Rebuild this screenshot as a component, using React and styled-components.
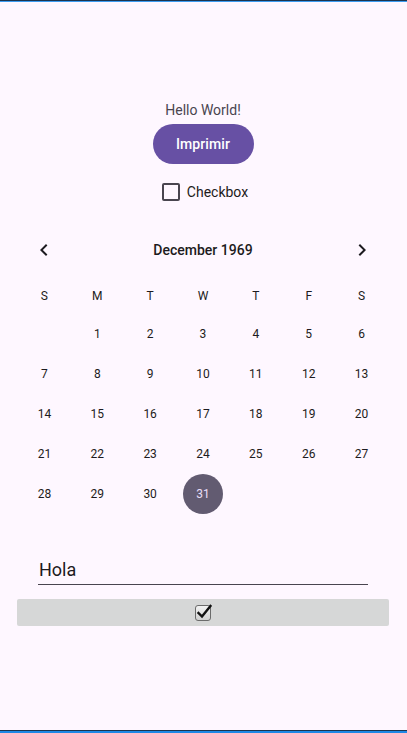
import React, { useState } from "react";
import styled, { createGlobalStyle } from "styled-components";

const GlobalStyle = createGlobalStyle`
  html, body {
    margin: 0;
    padding: 0;
    background: #fef7ff;
  }
  body {
    font-family: Roboto, "Noto Sans", sans-serif;
    color: #1d1b20;
  }
`;

const Screen = styled.div`
  width: 407px;
  height: 733px;
  display: flex;
  flex-direction: column;
  background: #fef7ff;
  overflow: hidden;
`;

const Edge = styled.div`
  height: ${(p) => (p.bottom ? 3 : 2)}px;
  flex-shrink: 0;
  background: ${(p) =>
    p.bottom
      ? "linear-gradient(#1b3550 0 1px, #1e88e5 1px)"
      : "linear-gradient(#1b3550 0 1px, #3d9cf0 1px)"};
`;

const Content = styled.div`
  flex: 1;
  display: flex;
  flex-direction: column;
  align-items: center;
  padding: 100px 1px 0 0;
`;

const Greeting = styled.div`
  font-size: 14px;
  line-height: 16px;
  color: #49454f;
`;

const PrimaryButton = styled.button`
  margin-top: 6px;
  width: 101px;
  height: 40px;
  border: none;
  border-radius: 20px;
  background: #6750a4;
  color: #ffffff;
  font-family: Roboto, sans-serif;
  font-size: 14px;
  font-weight: 500;
  letter-spacing: 0.1px;
  cursor: pointer;
`;

const CheckRow = styled.label`
  margin-top: 12px;
  height: 32px;
  display: flex;
  align-items: center;
  gap: 7px;
  font-size: 14px;
  color: #1d1b20;
  margin-left: 4px;
`;

const Box = styled.span`
  width: 14px;
  height: 14px;
  border: 2px solid #49454f;
  border-radius: 2px;
`;

const Calendar = styled.div`
  margin-top: 18px;
  width: 370px;
`;

const Grid = styled.div`
  display: grid;
  grid-template-columns: repeat(7, 1fr);
`;

const Header = styled(Grid)`
  height: 48px;
  align-items: center;
`;

const Nav = styled.span`
  display: flex;
  justify-content: center;
  align-items: center;
`;

const Title = styled.span`
  grid-column: 2 / span 5;
  text-align: center;
  font-size: 14px;
  font-weight: 500;
`;

const WeekRow = styled(Grid)`
  height: 40px;
  padding-top: 3px;
  box-sizing: border-box;
  align-items: center;
`;

const WeekDay = styled.span`
  text-align: center;
  font-size: 12px;
  color: #1d1b20;
`;

const Day = styled.span`
  height: 40px;
  display: flex;
  justify-content: center;
  align-items: center;
`;

const DayNum = styled.span`
  width: 40px;
  height: 40px;
  border-radius: 50%;
  display: flex;
  justify-content: center;
  align-items: center;
  font-size: 12px;
  background: ${(p) => (p.selected ? "#625b71" : "transparent")};
  color: ${(p) => (p.selected ? "#e8def8" : "#1d1b20")};
`;

const Field = styled.input`
  margin-top: 42px;
  align-self: flex-start;
  margin-left: 38px;
  width: 329px;
  height: 28px;
  box-sizing: content-box;
  padding: 0 0 0 1px;
  border: none;
  border-bottom: 1px solid #49454f;
  background: transparent;
  font-family: Roboto, sans-serif;
  font-size: 18px;
  line-height: 28px;
  color: #1d1b20;
  outline: none;
`;

const ToggleBar = styled.div`
  margin-top: 14px;
  width: 372px;
  height: 27px;
  border-radius: 2px;
  background: #d6d7d7;
  display: flex;
  justify-content: center;
  align-items: center;
`;

const Chevron = ({ dir }) => (
  <svg width="24" height="24" viewBox="0 0 24 24">
    <path
      fill="#1d1b20"
      d={
        dir === "left"
          ? "M15.41 7.41 14 6l-6 6 6 6 1.41-1.41L10.83 12z"
          : "M8.59 16.59 10 18l6-6-6-6-1.41 1.41L13.17 12z"
      }
    />
  </svg>
);

const CheckedIcon = () => (
  <svg width="17" height="17" viewBox="0 0 17 17">
    <defs>
      <linearGradient id="cb" x1="0" y1="0" x2="0" y2="1">
        <stop offset="0" stopColor="#f4f4f4" />
        <stop offset="1" stopColor="#cfcfcf" />
      </linearGradient>
    </defs>
    <rect x="0.5" y="1.5" width="15" height="15" rx="2.5" fill="url(#cb)" stroke="#6b6b6b" />
    <path d="M3.5 9 L7 12.5 L15.5 2" fill="none" stroke="#111" strokeWidth="2.4" strokeLinecap="square" />
  </svg>
);

const weekDays = ["S", "M", "T", "W", "T", "F", "S"];

// Dec 1969 starts on a Monday
const cells = [null, ...Array.from({ length: 31 }, (_, i) => i + 1)];

export default function App() {
  const [text, setText] = useState("Hola");
  return (
    <>
      <GlobalStyle />
      <Screen>
        <Edge />
        <Content>
          <Greeting>Hello World!</Greeting>
          <PrimaryButton>Imprimir</PrimaryButton>
          <CheckRow>
            <Box />
            Checkbox
          </CheckRow>
          <Calendar>
            <Header>
              <Nav>
                <Chevron dir="left" />
              </Nav>
              <Title>December 1969</Title>
              <Nav>
                <Chevron dir="right" />
              </Nav>
            </Header>
            <WeekRow>
              {weekDays.map((d, i) => (
                <WeekDay key={i}>{d}</WeekDay>
              ))}
            </WeekRow>
            <Grid>
              {cells.map((n, i) => (
                <Day key={i}>
                  {n && <DayNum selected={n === 31}>{n}</DayNum>}
                </Day>
              ))}
            </Grid>
          </Calendar>
          <Field value={text} onChange={(e) => setText(e.target.value)} />
          <ToggleBar>
            <CheckedIcon />
          </ToggleBar>
        </Content>
        <Edge bottom />
      </Screen>
    </>
  );
}
